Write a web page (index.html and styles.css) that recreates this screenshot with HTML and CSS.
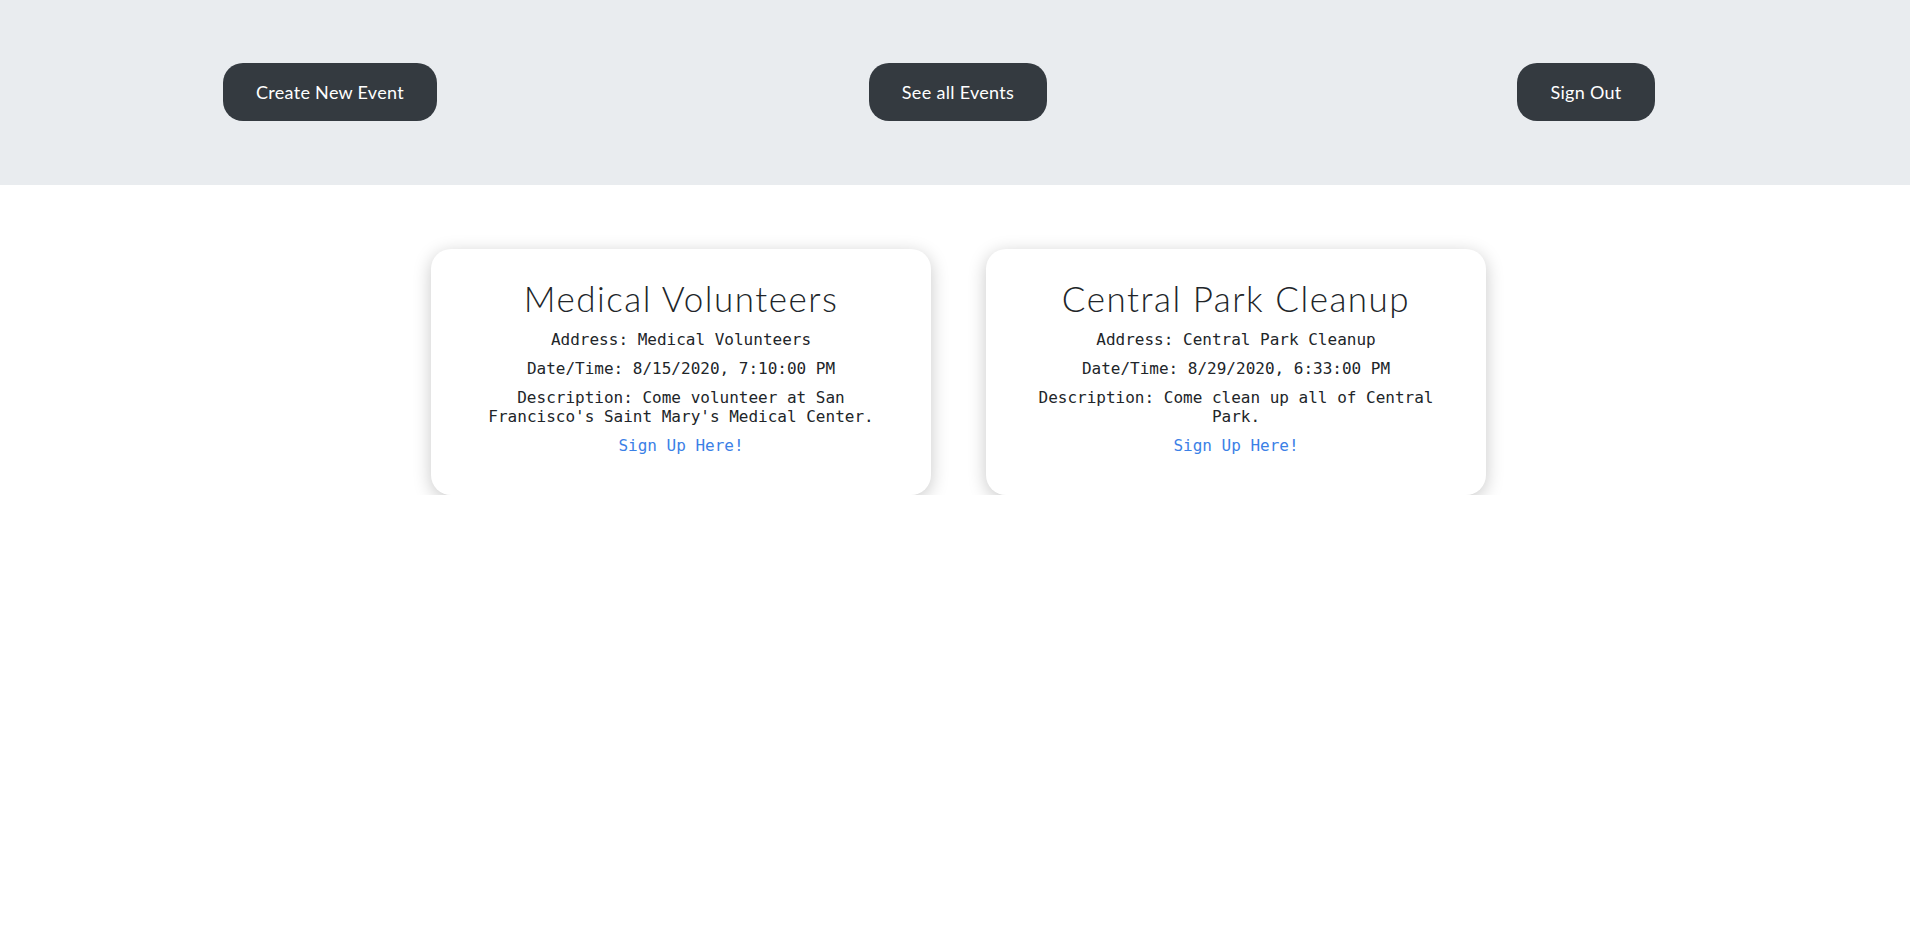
FILE: index.html
```html
<!DOCTYPE html>
<html>
<head>
<meta charset="utf-8">
<link rel="stylesheet" href="styles.css">
</head>
<body>
<header class="topbar">
  <div class="nav">
    <div class="nav-cell"><a class="btn" href="#">Create New Event</a></div>
    <div class="nav-cell"><a class="btn" href="#">See all Events</a></div>
    <div class="nav-cell"><a class="btn" href="#">Sign Out</a></div>
  </div>
</header>
<main class="events">
  <div class="card">
    <h2 class="card-title">Medical Volunteers</h2>
    <p>Address: Medical Volunteers</p>
    <p>Date/Time: 8/15/2020, 7:10:00 PM</p>
    <p>Description: Come volunteer at San Francisco's Saint Mary's Medical Center.</p>
    <a class="signup" href="#">Sign Up Here!</a>
  </div>
  <div class="card">
    <h2 class="card-title">Central Park Cleanup</h2>
    <p>Address: Central Park Cleanup</p>
    <p>Date/Time: 8/29/2020, 6:33:00 PM</p>
    <p>Description: Come clean up all of Central Park.</p>
    <a class="signup" href="#">Sign Up Here!</a>
  </div>
</main>
</body>
</html>
```
FILE: styles.css
```css
* { box-sizing: border-box; }
html, body { margin: 0; padding: 0; background: #fff; }
body { font-family: "DejaVu Sans Mono", "Liberation Mono", monospace; color: #212529; }

.topbar {
  background: #e9ecef;
  height: 185px;
  padding-top: 63px;
}
.nav {
  display: grid;
  grid-template-columns: repeat(3, 628px);
  justify-content: center;
  padding-left: 6px;
}
.nav-cell { display: flex; justify-content: center; }
.btn {
  display: inline-flex;
  align-items: center;
  justify-content: center;
  height: 58px;
  padding: 0 33px;
  background: #343a40;
  color: #fff;
  border-radius: 20px;
  text-decoration: none;
  font-family: "Lato", "Noto Sans", sans-serif;
  font-size: 18px;
  letter-spacing: 0.3px;
}

.events {
  display: flex;
  justify-content: center;
  gap: 55px;
  padding-top: 64px;
  padding-left: 7px;
}
.card {
  width: 500px;
  background: #fff;
  border-radius: 20px;
  box-shadow: 0 4px 18px rgba(0,0,0,0.22);
  padding: 29px 40px 40px;
  text-align: center;
}
.card-title {
  margin: 0 0 12px;
  font-family: "Lato", "Noto Sans", sans-serif;
  font-weight: 300;
  font-size: 35px;
  line-height: 40px;
  color: #212529;
  letter-spacing: 1.5px;
}
.card p {
  margin: 0 0 10px;
  font-size: 16px;
  line-height: 19px;
  color: #212529;
}
.signup {
  display: block;
  font-size: 16px;
  line-height: 19px;
  color: #3b80e6;
  text-decoration: none;
}
```
